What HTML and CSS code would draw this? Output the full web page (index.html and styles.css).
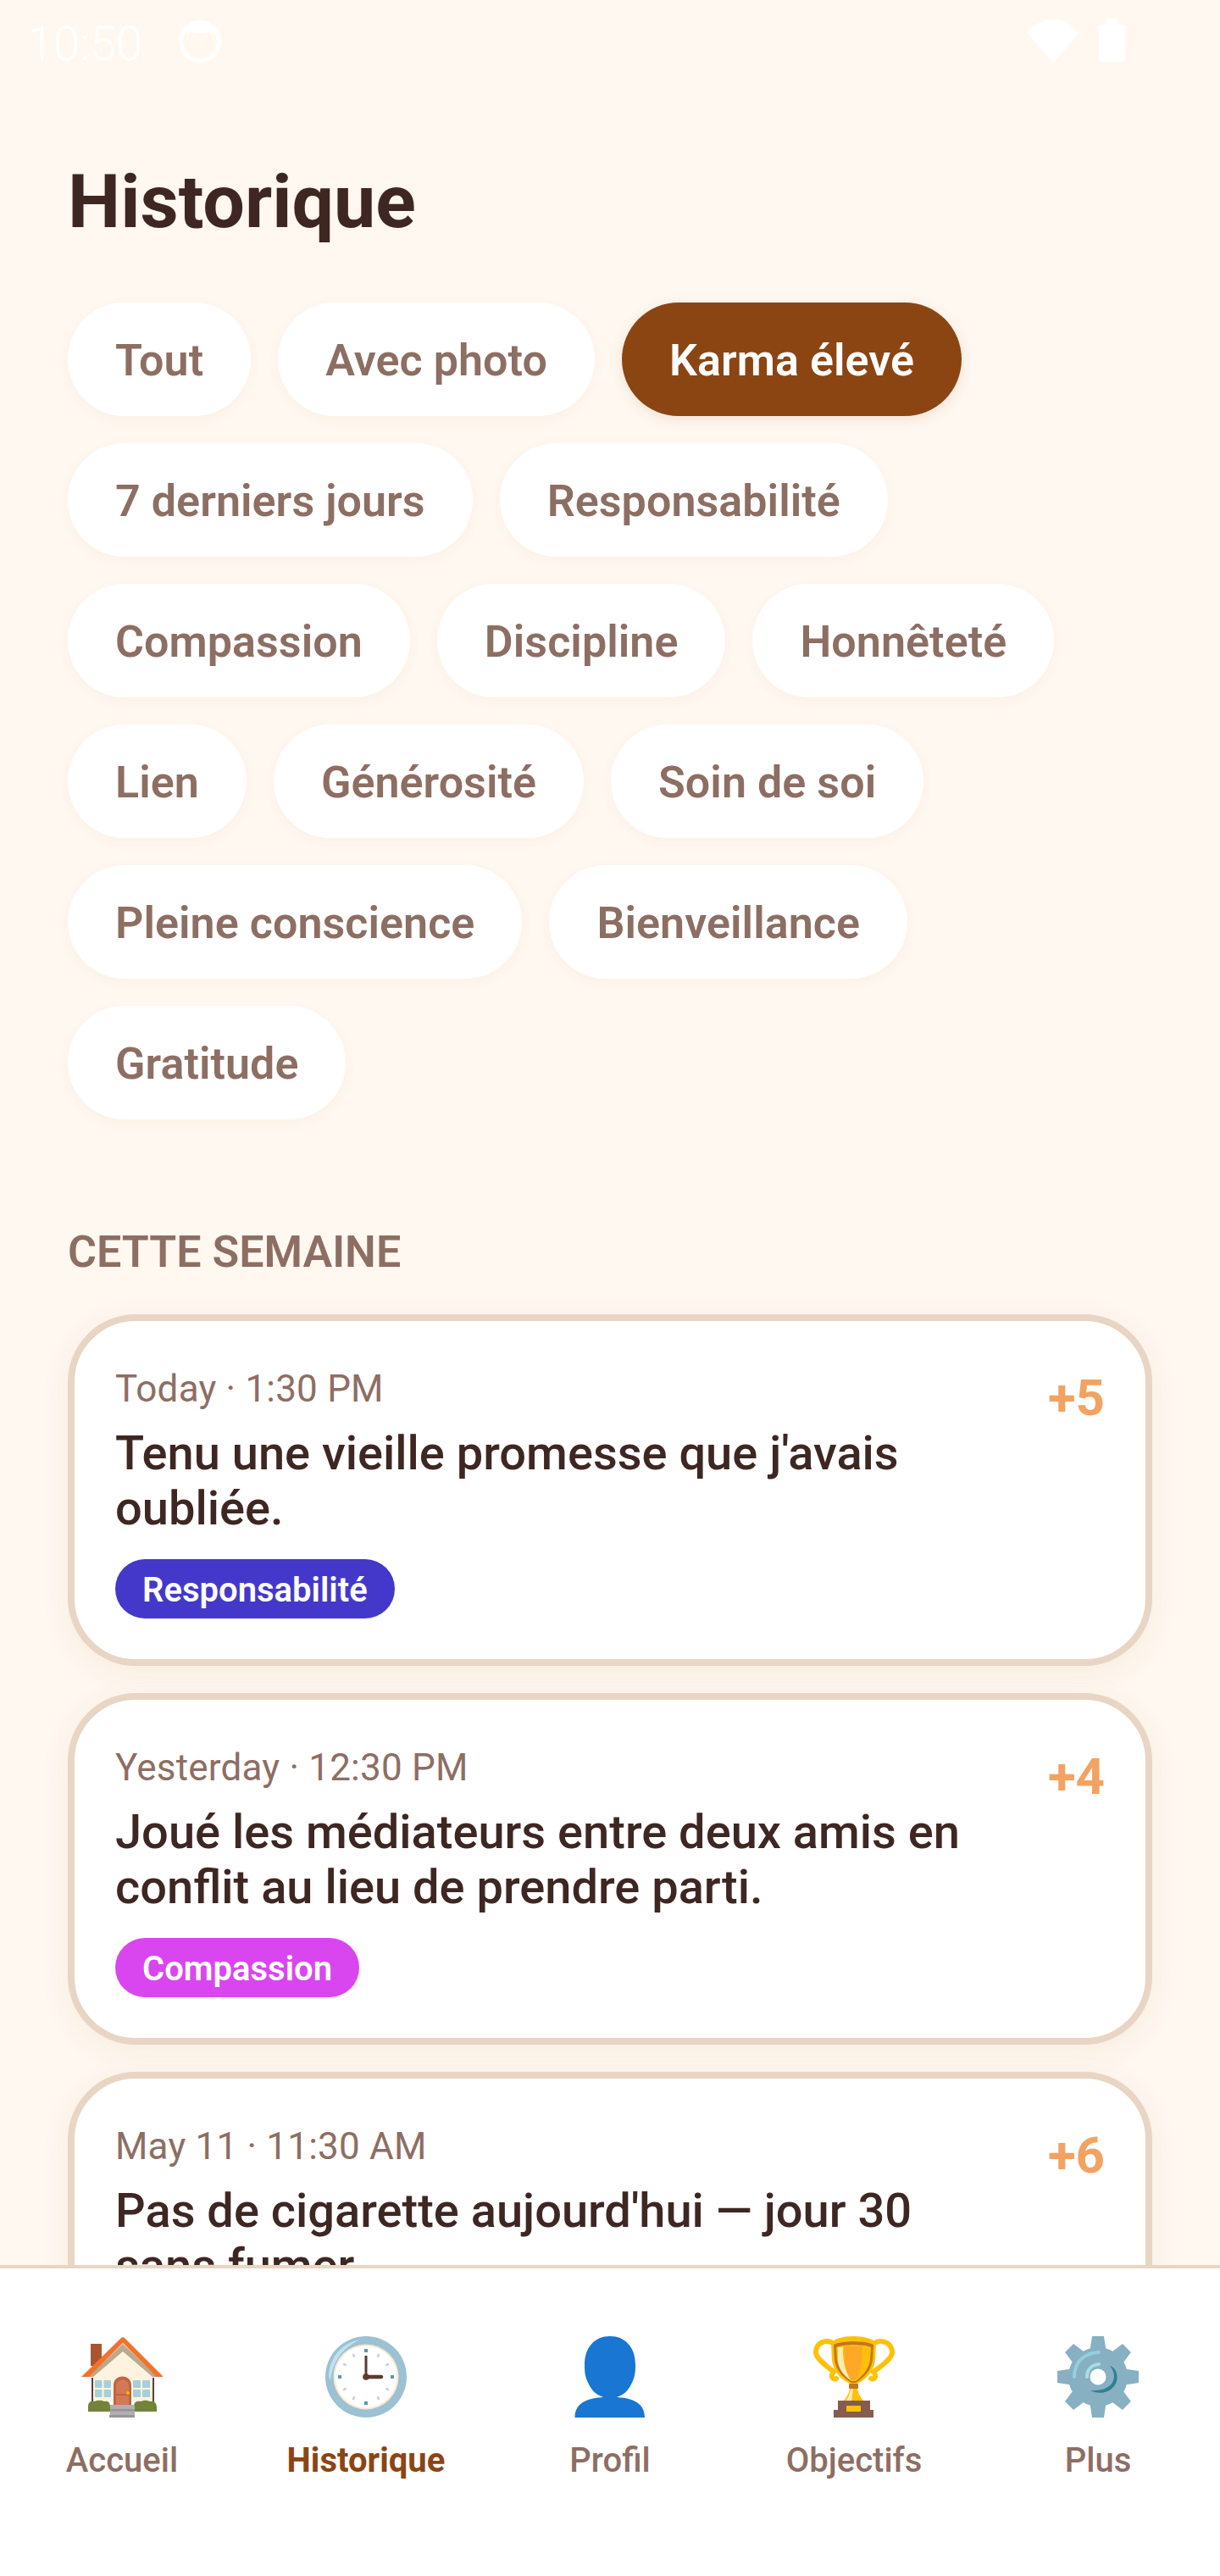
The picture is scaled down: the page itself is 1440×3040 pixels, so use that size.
FILE: index.html
```html
<!DOCTYPE html>
<html lang="fr">
<head>
	<meta charset="utf-8">
	<title>Historique</title>
	<link rel="stylesheet" href="styles.css">
</head>
<body>
<div class="screen">
	<div class="status-bar">
		<span class="clock-text">10:50</span>
		<svg class="status-app" viewBox="0 0 52 52">
			<circle cx="26" cy="26" r="22.500" fill="none" stroke="#fff" stroke-width="5"/>
			<path d="M9 9 C16 -1 36 -1 43 9 L40 19 L37 14 C30 17 22 17 15 14 L12 19Z" fill="#fff"/>
			<g fill="#fff" opacity="0.7">
				<circle cx="14" cy="31" r="1.500"/>
				<circle cx="20" cy="22" r="1"/>
				<circle cx="28" cy="27" r="1"/>
				<circle cx="34" cy="20" r="1"/>
				<circle cx="29" cy="33" r="1.500"/>
				<circle cx="22" cy="38" r="1"/>
				<circle cx="35" cy="36" r="1"/>
			</g>
		</svg>
		<span class="status-space"></span>
		<svg class="status-wifi" viewBox="0 0 60 50">
			<path d="M0 16 C15 -5 45 -5 60 16 L31 50 H29Z" fill="#fff"/>
		</svg>
		<svg class="status-battery" viewBox="0 0 31 51">
			<path d="M9 0 H22 V7 H29 Q31 7 31 9 V49 Q31 51 29 51 H2 Q0 51 0 49 V9 Q0 7 2 7 H9Z" fill="#fff"/>
		</svg>
	</div>

	<div class="content">
		<h1 class="page-title">Historique</h1>

		<div class="chips">
			<span class="chip">Tout</span>
			<span class="chip">Avec photo</span>
			<span class="chip chip-active">Karma élevé</span>
			<span class="chip">7 derniers jours</span>
			<span class="chip">Responsabilité</span>
			<span class="chip">Compassion</span>
			<span class="chip">Discipline</span>
			<span class="chip">Honnêteté</span>
			<span class="chip">Lien</span>
			<span class="chip">Générosité</span>
			<span class="chip">Soin de soi</span>
			<span class="chip">Pleine conscience</span>
			<span class="chip">Bienveillance</span>
			<span class="chip">Gratitude</span>
		</div>

		<h2 class="section-title">CETTE SEMAINE</h2>

		<div class="card">
			<div class="card-main">
				<div class="card-time">Today · 1:30 PM</div>
				<div class="card-text">Tenu une vieille promesse que j'avais oubliée.</div>
				<span class="tag tag-indigo">Responsabilité</span>
			</div>
			<div class="card-points">+5</div>
		</div>

		<div class="card">
			<div class="card-main">
				<div class="card-time">Yesterday · 12:30 PM</div>
				<div class="card-text">Joué les médiateurs entre deux amis en conflit au lieu de prendre parti.</div>
				<span class="tag tag-pink">Compassion</span>
			</div>
			<div class="card-points">+4</div>
		</div>

		<div class="card">
			<div class="card-main">
				<div class="card-time">May 11 · 11:30 AM</div>
				<div class="card-text">Pas de cigarette aujourd'hui — jour 30 sans fumer.</div>
			</div>
			<div class="card-points">+6</div>
		</div>
	</div>

	<div class="nav">
		<div class="nav-item">
			<!-- maison -->
			<svg class="nav-icon" viewBox="0 0 96 96">
				<rect x="11" y="9" width="13" height="26" fill="#a95530"/>
				<path d="M14 48 L49 15 L84 48 V78 H14Z" fill="#fff3e0"/>
				<path d="M13 49 V78 M85 49 V78" stroke="#5d4037" stroke-width="2" fill="none"/>
				<path d="M49 9 L90 48 H84 L49 18 L14 48 H8Z" fill="#bba98f"/>
				<path d="M49 1 Q50 1 52 3 L97 48 H89 L49 8 L9 48 H0 L46 3 Q48 1 49 1Z" fill="#f2722b"/>
				<g fill="#a5d0d8">
					<rect x="16" y="52" width="8.500" height="9" rx="1"/>
					<rect x="26.500" y="52" width="8.500" height="9" rx="1"/>
					<rect x="16" y="63" width="8.500" height="9" rx="1"/>
					<rect x="26.500" y="63" width="8.500" height="9" rx="1"/>
					<rect x="61" y="52" width="9" height="9" rx="1"/>
					<rect x="72" y="52" width="9" height="9" rx="1"/>
					<rect x="61" y="63" width="9" height="9" rx="1"/>
					<rect x="72" y="63" width="9" height="9" rx="1"/>
				</g>
				<path d="M38 83 V58 C38 44 59 44 59 58 V83Z" fill="#c0653f"/>
				<path d="M41 82 V59 C41 49 56 49 56 59 V82Z" fill="#d17a55"/>
				<rect x="41" y="68" width="15" height="2" fill="#c0653f"/>
				<circle cx="55" cy="67" r="2" fill="#ffb300"/>
				<path d="M8 89 V83 C8 77 12 76 16 77 C20 75 25 76 27 77 C32 76 34 79 34 83 V89Z" fill="#73833a"/>
				<path d="M62 89 V83 C62 77 66 76 71 77 C74 75 78 76 81 77 C86 76 89 79 89 84 V89Z" fill="#73833a"/>
				<rect x="34" y="81" width="29" height="15" fill="#b0b0b0"/>
				<rect x="34" y="86" width="29" height="2.500" fill="#969696"/>
				<rect x="33" y="93" width="30" height="3" fill="#969696"/>
			</svg>
			<span class="nav-label">Accueil</span>
		</div>
		<div class="nav-item nav-item-active">
			<!-- horloge -->
			<svg class="nav-icon" viewBox="0 0 96 96">
				<circle cx="48" cy="48" r="48" fill="#9bc1d3"/>
				<path d="M4 48 A44 44 0 0 1 41 4 C24 12 9 26 6 52Z" fill="#bfe2ee"/>
				<circle cx="48" cy="48" r="38.500" fill="#fbe9cf"/>
				<circle cx="48" cy="48" r="36.500" fill="#fff"/>
				<g fill="#c3ced3">
					<rect x="46.800" y="17" width="2.400" height="4" transform="rotate(30 48 48)"/>
					<rect x="46.800" y="17" width="2.400" height="4" transform="rotate(60 48 48)"/>
					<rect x="46.800" y="17" width="2.400" height="4" transform="rotate(120 48 48)"/>
					<rect x="46.800" y="17" width="2.400" height="4" transform="rotate(150 48 48)"/>
					<rect x="46.800" y="17" width="2.400" height="4" transform="rotate(210 48 48)"/>
					<rect x="46.800" y="17" width="2.400" height="4" transform="rotate(240 48 48)"/>
					<rect x="46.800" y="17" width="2.400" height="4" transform="rotate(300 48 48)"/>
					<rect x="46.800" y="17" width="2.400" height="4" transform="rotate(330 48 48)"/>
				</g>
				<g fill="#5e97a8">
					<rect x="46" y="15" width="4" height="4"/>
					<rect x="46" y="77" width="4" height="4"/>
					<rect x="15" y="46" width="4" height="4"/>
					<rect x="77" y="46" width="4" height="4"/>
				</g>
				<path d="M48 48 V23" stroke="#5d3a32" stroke-width="3" fill="none"/>
				<path d="M48 48 H66" stroke="#5d3a32" stroke-width="4.500" stroke-linecap="round" fill="none"/>
				<circle cx="48" cy="48" r="3.800" fill="#5d3a32"/>
			</svg>
			<span class="nav-label">Historique</span>
		</div>
		<div class="nav-item">
			<!-- silhouette -->
			<svg class="nav-icon" viewBox="0 0 96 96">
				<path d="M48 0 C66 0 78 13 78 34 C78 39 78 44 76 50 C72 60 68 68 56 72 C70 73 89 76 89 96 H6.500 C6.500 76 26 73 40 72 C28 68 24 60 20 50 C18 44 18 39 18 34 C18 13 30 0 48 0Z" fill="#1976d2"/>
			</svg>
			<span class="nav-label">Profil</span>
		</div>
		<div class="nav-item">
			<!-- trophee -->
			<svg class="nav-icon" viewBox="0 0 96 96">
				<path d="M23 8 C14 3 3 8 3 19 C3 26 14 34 24 42 C20 46 22 52 27 50" fill="none" stroke="#ffc107" stroke-width="6" stroke-linecap="round"/>
				<path d="M72 8 C81 3 93 8 93 19 C93 26 82 34 71 42 C75 46 73 52 68 50" fill="none" stroke="#ffc107" stroke-width="6" stroke-linecap="round"/>
				<path d="M21 9 C25 -3 70 -3 74 9 L73 28 C71 44 60 52 52 56 L43 56 C35 52 24 44 22 28Z" fill="#ffc107"/>
				<path d="M24 12 H71 L70 28 C68 42 58 50 50 55 H45 C37 50 27 42 25 28Z" fill="#c4761b"/>
				<path d="M24 10 C34 5 61 5 71 10 V14 C61 9 34 9 24 14Z" fill="#c4761b"/>
				<path d="M27 13 C36 10 59 10 68 13 L67 28 C65 41 56 48 50 53 H45 C39 48 30 41 28 28Z" fill="#ffc107"/>
				<path d="M36 12 H58 L57 30 C56 42 52 49 47 53 C42 49 38 42 37 30Z" fill="#ffa726"/>
				<path d="M29 13 H35 C34 24 37 40 44 52 C36 46 30 40 29 28Z" fill="#ffecb3"/>
				<rect x="42" y="56" width="11" height="6" rx="1" fill="#c4761b"/>
				<path d="M43 62 H52 C53 68 56 73 60 77 H35 C39 73 42 68 43 62Z" fill="#ffc107"/>
				<path d="M44 62 H47 L45 77 H38 C41 72 43 68 44 62Z" fill="#ffecb3"/>
				<path d="M29 76 H67 V87 H71 V96 H24 V87 H29Z" fill="#855c4e"/>
				<rect x="39" y="82" width="17" height="7" rx="1" fill="#ffc107"/>
			</svg>
			<span class="nav-label">Objectifs</span>
		</div>
		<div class="nav-item">
			<!-- engrenage -->
			<svg class="nav-icon" viewBox="0 0 96 96">
				<g fill="#87b0c2">
					<circle cx="48" cy="48" r="35"/>
					<path d="M41 0 H55 L58 20 H38Z"/>
					<path d="M41 0 H55 L58 20 H38Z" transform="rotate(45 48 48)"/>
					<path d="M41 0 H55 L58 20 H38Z" transform="rotate(90 48 48)"/>
					<path d="M41 0 H55 L58 20 H38Z" transform="rotate(135 48 48)"/>
					<path d="M41 0 H55 L58 20 H38Z" transform="rotate(180 48 48)"/>
					<path d="M41 0 H55 L58 20 H38Z" transform="rotate(225 48 48)"/>
					<path d="M41 0 H55 L58 20 H38Z" transform="rotate(270 48 48)"/>
					<path d="M41 0 H55 L58 20 H38Z" transform="rotate(315 48 48)"/>
				</g>
				<circle cx="48" cy="48" r="9.500" fill="#fff"/>
				<path d="M20 48 C20 30 32 20 49 19" fill="none" stroke="#92cfe0" stroke-width="4" stroke-linecap="round"/>
				<path d="M35 48 C35 40 40 34 49 33" fill="none" stroke="#a8dde6" stroke-width="4" stroke-linecap="round"/>
				<path d="M62 35 C72 46 68 66 39 64 C54 72 74 62 70 44 C69 40 66 36 62 35Z" fill="#2f7f92"/>
			</svg>
			<span class="nav-label">Plus</span>
		</div>
	</div>
</div>
</body>
</html>
```

FILE: styles.css
```css
* {
	box-sizing: border-box;
}

body {
	margin: 0;
	background-color: #fff8f0;
	font-family: Roboto, "Liberation Sans", sans-serif;
	color: #3e2723;
}

.screen {
	display: flex;
	flex-direction: column;
	height: 3040px;
	overflow: hidden;
}

/* status bar, white on cream like the capture */
.status-bar {
	display: flex;
	align-items: flex-start;
	flex: none;
	height: 96px;
	padding: 23px 112px 0 32px;
	color: #fff;
}

.clock-text {
	font-size: 56px;
	font-weight: 300;
	line-height: 56px;
	margin-top: 1px;
}

.status-app {
	width: 52px;
	height: 52px;
	margin-left: 42px;
}

.status-space {
	flex: 1;
}

.status-wifi {
	width: 60px;
	height: 50px;
}

.status-battery {
	width: 31px;
	height: 51px;
	margin-left: 24px;
	margin-top: -1px;
}

.content {
	flex: 1;
	min-height: 0;
	overflow: hidden;
	padding: 92px 80px 0;
}

.page-title {
	margin: 0 0 69px;
	font-size: 88px;
	font-weight: 700;
	line-height: 100px;
}

.chips {
	display: flex;
	flex-wrap: wrap;
	gap: 32px;
}

.chip {
	height: 134px;
	padding: 38px 56px 0;
	border-radius: 67px;
	background-color: #fff;
	color: #8d6e63;
	font-size: 52px;
	font-weight: 600;
	line-height: 62px;
	letter-spacing: 0.06px;
	box-shadow: 0 4px 16px rgba(139, 69, 19, 0.04);
}

.chip-active {
	background-color: #8b4513;
	color: #fff;
	box-shadow: 0 4px 16px rgba(139, 69, 19, 0.12);
}

.section-title {
	margin: 127px 0 43px;
	color: #8d6e63;
	font-size: 52px;
	font-weight: 600;
	line-height: 60px;
}

.card {
	display: flex;
	gap: 32px;
	margin-bottom: 32px;
	padding: 48px;
	border: 8px solid #e8d5c4;
	border-radius: 80px;
	background-color: #fff;
	box-shadow: 0 8px 36px rgba(139, 69, 19, 0.07);
}

.card-main {
	flex: 1;
	min-width: 0;
}

.card-time {
	margin-top: 6px;
	color: #8d6e63;
	font-size: 44px;
	line-height: 52px;
	letter-spacing: 0.2px;
}

.card-text {
	margin: 18px 0 27px;
	font-size: 56px;
	font-weight: 500;
	line-height: 65px;
}

.tag {
	display: inline-block;
	height: 70px;
	padding: 0 32px;
	border-radius: 35px;
	color: #fff;
	font-size: 40px;
	font-weight: 600;
	line-height: 74px;
	vertical-align: top;
}

.tag-indigo {
	background-color: #4338ca;
}

.tag-pink {
	background-color: #d946ef;
}

.card-points {
	flex: none;
	margin-top: 8px;
	color: #f4a261;
	font-size: 60px;
	font-weight: 700;
	line-height: 70px;
}

/* bottom tab bar */
.nav {
	display: flex;
	flex: none;
	height: 367px;
	padding-top: 80px;
	border-top: 4px solid #e8d5c4;
	background-color: #fff;
}

.nav-item {
	display: flex;
	flex: 1;
	flex-direction: column;
	align-items: center;
	gap: 27px;
}

.nav-icon {
	width: 96px;
	height: 96px;
}

.nav-label {
	color: #8d6e63;
	font-size: 40px;
	font-weight: 500;
	line-height: 47px;
}

.nav-item-active .nav-label {
	color: #8b4513;
	font-weight: 700;
}
```
